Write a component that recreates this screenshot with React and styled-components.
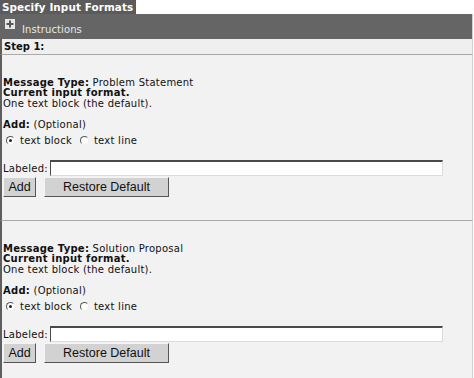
import React from 'react';
import styled, { createGlobalStyle } from 'styled-components';

const GlobalStyle = createGlobalStyle`
    body {
        margin: 0;
        background: #ffffff;
        font-family: "DejaVu Sans", Verdana, sans-serif;
        font-size: 10px;
        letter-spacing: 0.25px;
        color: #111;
    }
`;

const Page = styled.div`
    width: 473px;
`;

const TitleTab = styled.div`
    display: inline-block;
    background-color: #5b5b5b;
    color: #ffffff;
    font-weight: bold;
    font-size: 10.4px;
    letter-spacing: 0.1px;
    line-height: 14px;
    height: 14px;
    padding: 0 3px 0 2px;
`;

const HeaderBar = styled.div`
    display: flex;
    align-items: flex-start;
    gap: 7px;
    height: 25px;
    box-sizing: border-box;
    padding: 5px 0 0 5px;
    background-color: #656565;
    border-right: 1px solid #cfcfcf;
    color: #e8e8e8;
    font-size: 10px;
    letter-spacing: 0.1px;
`;

const PlusIcon = styled.span`
    display: block;
    width: 10px;
    height: 10px;
`;

const HeaderLabel = styled.span`
    margin-top: 5px;
    line-height: 11px;
`;

const StepRow = styled.div`
    height: 16px;
    box-sizing: border-box;
    line-height: 15px;
    padding-left: 2px;
    background-color: #efefef;
    border-left: 2px solid #5e5e5e;
    border-right: 1px solid #cfcfcf;
    border-bottom: 1px solid #a9a9a9;
    font-weight: bold;
    letter-spacing: 0;
`;

const Section = styled.div`
    height: 166px;
    box-sizing: border-box;
    padding: 23px 0 0 1px;
    background-color: #f2f2f2;
    border-left: 2px solid #5e5e5e;
    border-right: 1px solid #cfcfcf;
    border-bottom: ${(p) => (p.$last ? 'none' : '1px solid #a9a9a9')};
`;

const Line = styled.div`
    line-height: 10.3px;
    white-space: nowrap;
`;

const AddLine = styled(Line)`
    margin-top: 11px;
`;

const RadioRow = styled.div`
    display: flex;
    align-items: center;
    height: 13px;
    margin-top: 4px;
    padding-left: 3px;
`;

const RadioLabel = styled.label`
    display: flex;
    align-items: center;
    gap: 5px;
    margin-right: 8px;
`;

const Radio = styled.input.attrs({ type: 'radio' })`
    appearance: none;
    margin: 0;
    width: 9px;
    height: 9px;
    box-sizing: border-box;
    border-radius: 50%;
    border: 1px solid;
    border-color: #555 #eee #eee #555;
    background: #ffffff;
    position: relative;
    &:checked::after {
        content: '';
        position: absolute;
        left: 2px;
        top: 2px;
        width: 3px;
        height: 3px;
        border-radius: 50%;
        background: #222;
    }
`;

const FieldRow = styled.div`
    display: flex;
    align-items: center;
    gap: 2px;
    margin-top: 13px;
`;

const TextInput = styled.input.attrs({ type: 'text' })`
    width: 393px;
    height: 16px;
    box-sizing: border-box;
    margin: 0;
    padding: 0 2px;
    background: #ffffff;
    border-style: solid;
    border-width: 2px 1px 1px 1px;
    border-color: #4a4a4a #dcdcdc #dcdcdc #4a4a4a;
    outline: none;
`;

const ButtonRow = styled.div`
    display: flex;
    gap: 8px;
    margin-top: 1px;
`;

const Button = styled.button`
    width: ${(p) => p.$width}px;
    height: 20px;
    box-sizing: border-box;
    margin: 0;
    padding: 0;
    font-family: "Liberation Sans", Arial, sans-serif;
    font-size: 12.5px;
    letter-spacing: 0;
    color: #111;
    background-color: #d2d2d2;
    border: 1px solid;
    border-color: #f4f4f4 #555 #555 #f4f4f4;
`;

const Plus = () => (
    <PlusIcon>
        <svg width="10" height="10" viewBox="0 0 10 10">
            <rect x="0" y="0" width="10" height="10" fill="#e6e6e6" />
            <rect x="4" y="1.5" width="2" height="7" fill="#555" />
            <rect x="1.5" y="4" width="7" height="2" fill="#555" />
        </svg>
    </PlusIcon>
);

const FormatSection = ({ messageType, name, last }) => (
    <Section $last={last}>
        <Line><b>Message Type:</b> {messageType}</Line>
        <Line><b>Current input format.</b></Line>
        <Line>One text block (the default).</Line>
        <AddLine><b>Add:</b> (Optional)</AddLine>
        <RadioRow>
            <RadioLabel><Radio name={name} defaultChecked /> text block</RadioLabel>
            <RadioLabel><Radio name={name} /> text line</RadioLabel>
        </RadioRow>
        <FieldRow>
            <span>Labeled:</span>
            <TextInput />
        </FieldRow>
        <ButtonRow>
            <Button $width={33}>Add</Button>
            <Button $width={125}>Restore Default</Button>
        </ButtonRow>
    </Section>
);

const App = () => (
    <Page>
        <GlobalStyle />
        <TitleTab>Specify Input Formats</TitleTab>
        <HeaderBar>
            <Plus />
            <HeaderLabel>Instructions</HeaderLabel>
        </HeaderBar>
        <StepRow>Step 1:</StepRow>
        <FormatSection messageType="Problem Statement" name="fmt1" />
        <FormatSection messageType="Solution Proposal" name="fmt2" last />
    </Page>
);

export default App;
